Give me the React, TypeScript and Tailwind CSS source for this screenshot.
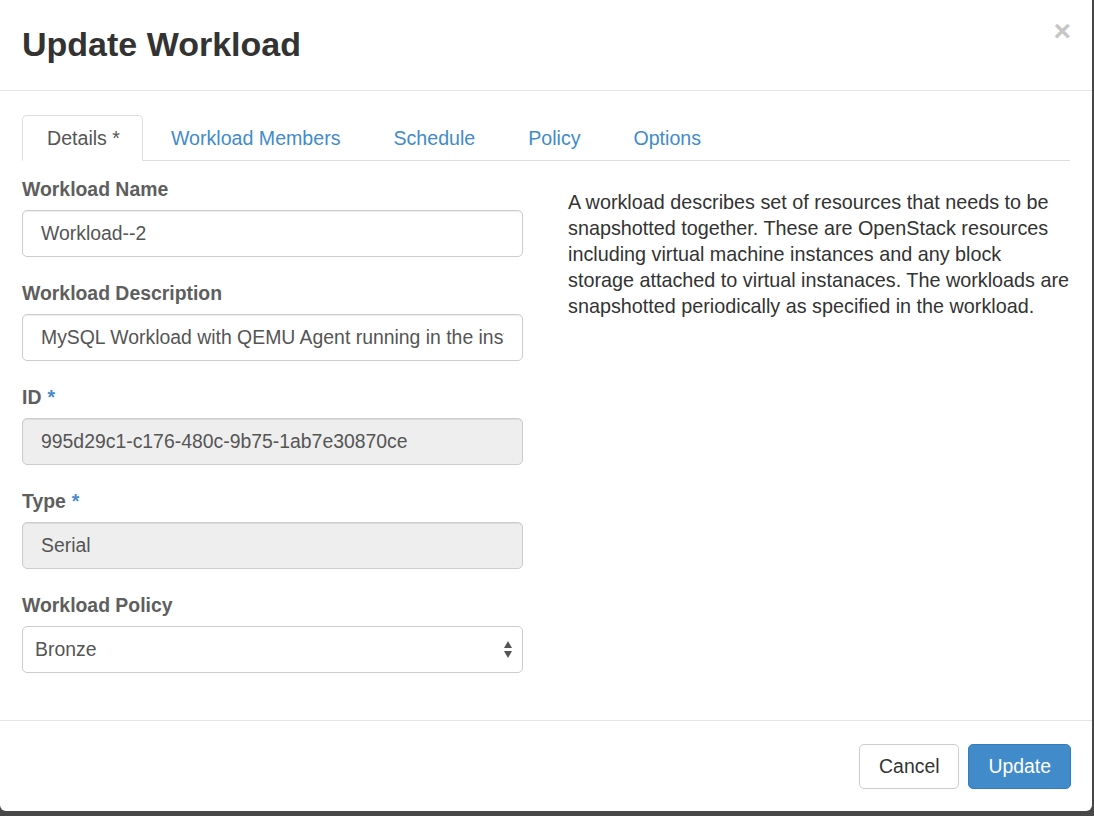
import React from "react";

const tabs = ["Workload Members", "Schedule", "Policy", "Options"];

function Label({ text, required }: { text: string; required?: boolean }) {
  return (
    <label className="block text-[19.4px] leading-[27px] font-bold text-[#5e5e5e] mb-[7px]">
      {text}
      {required && <span className="text-[#428bca] ml-[6px]">*</span>}
    </label>
  );
}

export default function App() {
  return (
    <div className="min-h-screen bg-[#484848] font-['Liberation_Sans',Arial,sans-serif]">
      <div className="w-[1092px] bg-white rounded-b-[6px]">
        {/* Header */}
        <div className="h-[91px] border-b border-[#e5e5e5] px-[22px] flex justify-between items-start">
          <h3 className="text-[34px] font-bold text-[#333] leading-none mt-[27px]">
            Update Workload
          </h3>
          <button className="text-[30px] font-bold text-[#c6c6c6] leading-none mt-[16px] mr-[-1px]">
            ×
          </button>
        </div>

        {/* Body */}
        <div className="px-[22px] pt-[24px] pb-[47px]">
          <ul className="flex border-b border-[#ddd] text-[19.6px] leading-[27px]">
            <li className="-mb-px mr-[2px] pl-[24px] pr-[22px] pt-[9px] pb-[8px] border border-[#ddd] border-b-white rounded-t-[5px] bg-white text-[#555]">
              Details *
            </li>
            {tabs.map((t, i) => (
              <li
                key={i}
                className="-mb-px mr-[1px] px-[25px] pt-[9px] pb-[8px] border border-transparent text-[#428bca]"
              >
                {t}
              </li>
            ))}
          </ul>

          <div className="grid grid-cols-[501px_1fr] gap-[45px] pt-[15px]">
            {/* Left form */}
            <div className="flex flex-col gap-[23px]">
              <div>
                <Label text="Workload Name" />
                <input
                  defaultValue="Workload--2"
                  className="w-full h-[47px] px-[18px] border border-[#ccc] rounded-[5px] text-[19.4px] text-[#555] shadow-[inset_0_1px_1px_rgba(0,0,0,0.075)] outline-none"
                />
              </div>
              <div>
                <Label text="Workload Description" />
                <input
                  defaultValue="MySQL Workload with QEMU Agent running in the instance"
                  className="w-full h-[47px] px-[18px] border border-[#ccc] rounded-[5px] text-[19.4px] text-[#555] shadow-[inset_0_1px_1px_rgba(0,0,0,0.075)] outline-none"
                />
              </div>
              <div>
                <Label text="ID" required />
                <input
                  readOnly
                  defaultValue="995d29c1-c176-480c-9b75-1ab7e30870ce"
                  className="w-full h-[47px] px-[18px] border border-[#ccc] rounded-[5px] bg-[#eee] text-[19.4px] text-[#555] shadow-[inset_0_1px_1px_rgba(0,0,0,0.075)] outline-none"
                />
              </div>
              <div>
                <Label text="Type" required />
                <input
                  readOnly
                  defaultValue="Serial"
                  className="w-full h-[47px] px-[18px] border border-[#ccc] rounded-[5px] bg-[#eee] text-[19.4px] text-[#555] shadow-[inset_0_1px_1px_rgba(0,0,0,0.075)] outline-none"
                />
              </div>
              <div>
                <Label text="Workload Policy" />
                <div className="relative h-[47px] border border-[#ccc] rounded-[5px] bg-white flex items-center pl-[12px] text-[19.4px] text-[#555]">
                  Bronze
                  <svg
                    className="absolute right-[9px] top-[13px]"
                    width="10"
                    height="19"
                    viewBox="0 0 10 19"
                  >
                    <path d="M5 1 L9 8 L1 8 Z" fill="#555" />
                    <path d="M1 11 L9 11 L5 18 Z" fill="#555" />
                  </svg>
                </div>
              </div>
            </div>

            {/* Right help text */}
            <p className="mt-[13px] text-[19.8px] leading-[26px] text-[#333] whitespace-nowrap">
              A workload describes set of resources that needs to be
              <br />
              snapshotted together. These are OpenStack resources
              <br />
              including virtual machine instances and any block
              <br />
              storage attached to virtual instanaces. The workloads are
              <br />
              snapshotted periodically as specified in the workload.
            </p>
          </div>
        </div>

        {/* Footer */}
        <div className="border-t border-[#e5e5e5] px-[21px] pt-[23px] pb-[22px] flex justify-end gap-[9px]">
          <button className="h-[45px] px-[19px] border border-[#ccc] rounded-[5px] bg-white text-[19.4px] text-[#333]">
            Cancel
          </button>
          <button className="h-[45px] px-[19px] border border-[#357ebd] rounded-[5px] bg-[#428bca] text-[19.4px] text-white">
            Update
          </button>
        </div>
      </div>
    </div>
  );
}
